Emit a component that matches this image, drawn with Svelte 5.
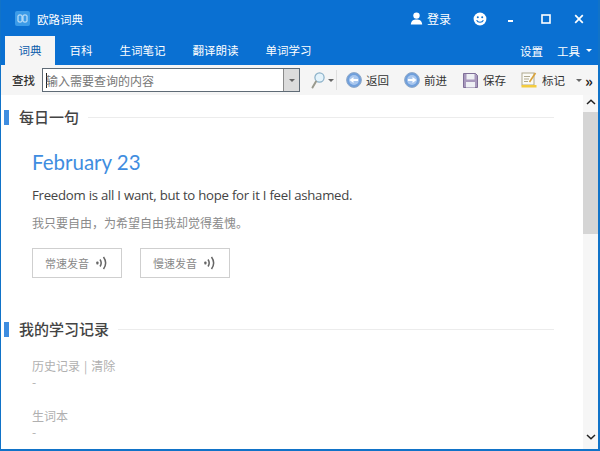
<script>
  const tabs = ['百科', '生词笔记', '翻译朗读', '单词学习'];
</script>

<div class="window">
  <header class="titlebar">
    <div class="brand">
      <svg class="logo" width="15" height="15" viewBox="0 0 15 15"><rect width="15" height="15" rx="2" fill="#3b9be8"/><rect x="3" y="4" width="4" height="7" rx="1" fill="none" stroke="#d8ecfb" stroke-width="1"/><rect x="8" y="4" width="4" height="7" rx="1" fill="none" stroke="#d8ecfb" stroke-width="1"/></svg>
      <span>欧路词典</span>
    </div>
    <div class="winctl">
      <svg class="user" width="13" height="13" viewBox="0 0 13 13"><circle cx="6.5" cy="3.6" r="3.2" fill="#fff"/><path d="M0.8 12.5 C1 8.6 3.5 7.4 6.5 7.4 C9.5 7.4 12 8.6 12.2 12.5Z" fill="#fff"/></svg>
      <span class="login">登录</span>
      <svg class="smile" width="14" height="14" viewBox="0 0 14 14"><circle cx="7" cy="7" r="6.4" fill="#fff"/><circle cx="4.8" cy="5.3" r="1" fill="#0a70d2"/><circle cx="9.2" cy="5.3" r="1" fill="#0a70d2"/><path d="M3.6 8.2 C5 11 9 11 10.4 8.2" fill="none" stroke="#0a70d2" stroke-width="1.1"/></svg>
      <svg class="min" width="10" height="10" viewBox="0 0 10 10"><rect x="2" y="6" width="5" height="2" fill="#fff"/></svg>
      <svg class="max" width="10" height="10" viewBox="0 0 10 10"><rect x="1" y="1" width="8" height="8" fill="none" stroke="#fff" stroke-width="1.6"/></svg>
      <svg class="close" width="10" height="10" viewBox="0 0 10 10"><path d="M1.2 1.2 L8.8 8.8 M8.8 1.2 L1.2 8.8" stroke="#fff" stroke-width="1.7"/></svg>
    </div>
  </header>

  <nav class="tabbar">
    <div class="tab active">词典</div>
    {#each tabs as t}<div class="tab">{t}</div>{/each}
    <div class="navright">
      <span>设置</span>
      <span class="tools">工具</span>
      <span class="caret white"></span>
    </div>
  </nav>

  <div class="toolbar">
    <span class="find">查找</span>
    <div class="combo">
      <div class="input"><span class="cursor"></span>输入需要查询的内容</div>
      <div class="drop"><span class="caret"></span></div>
    </div>
    <svg class="lens" width="14" height="17" viewBox="0 0 14 17"><circle cx="8.5" cy="5.5" r="4.6" fill="#e4f3fb" stroke="#8ab0c8" stroke-width="1.2"/><path d="M5 9.5 L1.5 15.5" stroke="#9a9a8e" stroke-width="2" stroke-linecap="round"/></svg>
    <span class="caret lenscaret"></span>
    <span class="sep"></span>
    <div class="tool back">
      <svg width="16" height="16" viewBox="0 0 16 16"><circle cx="8" cy="8" r="7.4" fill="#6f9fdc" stroke="#8fa9c9" stroke-width="1"/><circle cx="8" cy="8" r="5" fill="#a9c7ee"/><path d="M3.5 8 L7.5 5 V7 H12 V9 H7.5 V11Z" fill="#fff"/></svg>
      <span>返回</span>
    </div>
    <div class="tool fwd">
      <svg width="16" height="16" viewBox="0 0 16 16"><circle cx="8" cy="8" r="7.4" fill="#6f9fdc" stroke="#8fa9c9" stroke-width="1"/><circle cx="8" cy="8" r="5" fill="#a9c7ee"/><path d="M12.5 8 L8.5 5 V7 H4 V9 H8.5 V11Z" fill="#fff"/></svg>
      <span>前进</span>
    </div>
    <div class="tool save">
      <svg width="15" height="15" viewBox="0 0 15 15"><path d="M0.5 0.5 H12.5 L14.5 2.5 V14.5 H0.5Z" fill="#a899bd" stroke="#7f6f98"/><rect x="3.5" y="1" width="8" height="5.5" fill="#eef0f4"/><rect x="3" y="9" width="9" height="5.5" fill="#eef0f4"/></svg>
      <span>保存</span>
    </div>
    <div class="tool mark">
      <svg width="16" height="16" viewBox="0 0 16 16"><rect x="1" y="1" width="12" height="12" fill="#fbfbf6" stroke="#b0a98e"/><path d="M3 4.5 H9 M3 7 H8 M3 9.5 H7" stroke="#b0a98e"/><path d="M14.5 1 L8.5 10" stroke="#d9a23a" stroke-width="1.6"/><rect x="0.5" y="13" width="15" height="2.5" fill="#f4cc3e"/></svg>
      <span>标记</span>
    </div>
    <span class="caret markcaret"></span>
    <span class="more">»</span>
  </div>

  <div class="body">
    <main class="content">
      <div class="heading first"><span class="bar"></span><h2>每日一句</h2><span class="rule"></span></div>
      <section class="daily">
        <div class="date">February 23</div>
        <p class="en">Freedom is all I want, but to hope for it I feel ashamed.</p>
        <p class="zh">我只要自由，为希望自由我却觉得羞愧。</p>
        <div class="btns">
          <div class="btn"><span>常速发音</span>
            <svg width="12" height="14" viewBox="0 0 12 14"><rect x="0.3" y="5.5" width="2.2" height="3" rx="0.8" fill="#666"/><path d="M4 3.5 Q6.4 7 4 10.5" fill="none" stroke="#666" stroke-width="1.5"/><path d="M7.5 1 Q11.8 7 7.5 13" fill="none" stroke="#666" stroke-width="1.5"/></svg>
          </div>
          <div class="btn"><span>慢速发音</span>
            <svg width="12" height="14" viewBox="0 0 12 14"><rect x="0.3" y="5.5" width="2.2" height="3" rx="0.8" fill="#666"/><path d="M4 3.5 Q6.4 7 4 10.5" fill="none" stroke="#666" stroke-width="1.5"/><path d="M7.5 1 Q11.8 7 7.5 13" fill="none" stroke="#666" stroke-width="1.5"/></svg>
          </div>
        </div>
      </section>
      <div class="heading second"><span class="bar"></span><h2>我的学习记录</h2><span class="rule"></span></div>
      <section class="records">
        <div class="rec">历史记录<span class="pipe">|</span>清除</div>
        <div class="dash">-</div>
        <div class="rec gap">生词本</div>
        <div class="dash">-</div>
      </section>
    </main>
    <aside class="scroll">
      <svg class="arrow" width="10" height="6" viewBox="0 0 10 6"><path d="M1 5 L5 1.3 L9 5" fill="none" stroke="#222" stroke-width="1.5"/></svg>
      <div class="thumb"></div>
      <div class="track"></div>
      <svg class="arrow down" width="10" height="6" viewBox="0 0 10 6"><path d="M1 1 L5 4.7 L9 1" fill="none" stroke="#222" stroke-width="1.5"/></svg>
    </aside>
  </div>
</div>

<style>
  :global(body) { margin: 0; background: #fff; }
  .window {
    width: 600px; height: 451px; box-sizing: border-box; overflow: hidden;
    display: flex; flex-direction: column;
    background: #0a70d2;
    border: solid #1173c8; border-width: 0 2px 2px 1px;
    font-family: "Noto Sans CJK SC", "Liberation Sans", sans-serif;
    font-size: 12px; color: #333; white-space: nowrap;
  }
  .titlebar { height: 36px; display: flex; align-items: center; justify-content: space-between; color: #fff; padding-top: 1px; box-sizing: border-box; flex: none; }
  .brand { display: flex; align-items: center; gap: 7px; padding-left: 14px; font-size: 11.5px; }
  .winctl { display: flex; align-items: center; }
  .login { font-size: 12px; margin-left: 4px; }
  .smile { margin-left: 22px; }
  .min { margin-left: 19px; }
  .max { margin-left: 25px; }
  .close { margin-left: 23px; margin-right: 14px; }

  .tabbar { height: 29px; display: flex; flex: none; padding-left: 4px; color: #fff; }
  .tab { padding: 0 13.5px 0 13.5px; line-height: 28px; font-size: 11.5px; }
  .tab:nth-child(2) { margin-left: 1px; }
  .tab.active { background: #f5f5f5; color: #0a5cab; width: 50px; box-sizing: border-box; padding: 0; text-align: center; }
  .navright { margin-left: auto; display: flex; align-items: center; font-size: 11.5px; padding-right: 6px; }
  .tools { margin-left: 14px; }
  .caret { display: inline-block; flex: none; width: 0; height: 0; border: 3px solid transparent; border-top: 3px solid #666; border-bottom: 0; }
  .caret.white { border-top-color: #fff; margin-left: 6px; }

  .toolbar { height: 30px; flex: none; background: #f5f5f5; display: flex; align-items: center; font-size: 11.5px; color: #333; }
  .find { margin-left: 11px; font-weight: 500; font-size: 11.5px; }
  .combo { margin-left: 7px; width: 258px; height: 24px; flex: none; box-sizing: border-box; border: 1px solid #5f6b76; display: flex; background: #fff; }
  .input { flex: 1; color: #777; display: flex; align-items: center; font-size: 12px; padding-left: 3px; }
  .cursor { width: 1px; height: 15px; background: #222; margin-right: -1px; }
  .drop { width: 15px; background: #dcdcdc; border-left: 1px solid #8b8b8b; display: flex; align-items: center; justify-content: center; }
  .lens { margin-left: 11px; flex: none; }
  .lenscaret { margin-left: 3px; }
  .sep { width: 1px; height: 20px; background: #dedede; margin-left: 2px; flex: none; }
  .tool { display: flex; align-items: center; gap: 4px; flex: none; }
  .back { margin-left: 9px; }
  .fwd { margin-left: 15px; }
  .save { margin-left: 16px; gap: 5px; }
  .mark { margin-left: 15px; gap: 5px; }
  .markcaret { margin-left: 11px; }
  .more { margin-left: 3px; font-weight: 700; font-size: 15px; line-height: 1; color: #222; }

  .body { flex: 1; min-height: 0; display: flex; background: #fff; }
  .content { flex: 1; min-width: 0; overflow: hidden; }
  .scroll { width: 15px; flex: none; background: #f6f6f6; display: flex; flex-direction: column; align-items: center; }
  .arrow { margin: 4px 0 7px; flex: none; }
  .arrow.down { margin: 0 0 9px; }
  .thumb { width: 100%; height: 122px; background: #d5d5d5; flex: none; }
  .track { flex: 1; }

  .heading { display: flex; align-items: center; }
  .heading.first { margin-top: 12px; }
  .heading.second { margin-top: 41px; }
  .bar { width: 5px; height: 15px; background: #3f8de0; margin-left: 3px; flex: none; }
  h2 { margin: 0 0 0 10px; font-size: 15px; font-weight: 500; line-height: 20px; color: #444; }
  .rule { height: 1px; background: #ececec; margin: 0 29px 0 9px; flex: 1; }

  .daily { padding: 21px 0 0 31px; }
  .date { font-family: Lato, "Open Sans", sans-serif; font-weight: 400; font-size: 20.5px; line-height: 28px; color: #3f8de0; }
  .en { margin: 9px 0 0; font-family: "Open Sans", sans-serif; font-size: 13.2px; line-height: 20px; letter-spacing: -0.25px; color: #444; }
  .zh { margin: 8px 0 0; font-size: 12px; line-height: 20px; color: #8a8a8a; }
  .btns { display: flex; gap: 18px; margin-top: 15px; }
  .btn { width: 90px; height: 30px; box-sizing: border-box; border: 1px solid #cfcfcf; display: flex; align-items: center; padding-left: 12px; gap: 7px; font-size: 11px; color: #888; }

  .records { padding: 17px 0 0 31px; color: #b0b0b0; font-size: 12px; }
  .rec { line-height: 20px; }
  .pipe { margin: 0 4px; }
  .rec.gap { margin-top: 19px; }
  .dash { line-height: 11px; font-size: 12px; margin-top: 0; }
</style>
